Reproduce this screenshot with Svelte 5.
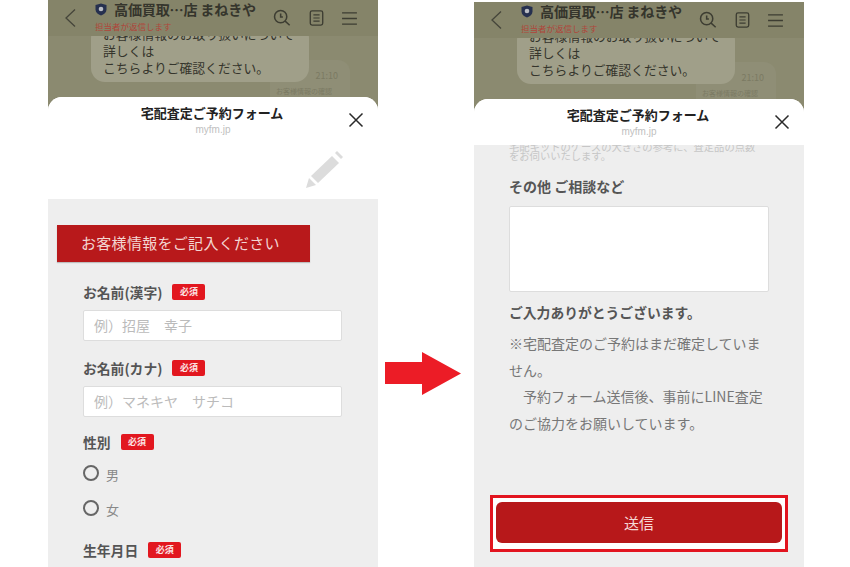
<script>
</script>

{#snippet top()}
  <div class="bar">
    <svg class="back" width="14" height="20" viewBox="0 0 14 20"><path d="M12 1.500 L3 10 L12 18.500" fill="none" stroke="#45453a" stroke-width="1.300"/></svg>
    <div class="titles">
      <div class="name">
        <svg width="12" height="13" viewBox="0 0 12 13"><path d="M6 .5 L11.500 2 V6.500 C11.500 9.500 9 11.500 6 12.500 C3 11.500 .5 9.500 .5 6.500 V2 Z" fill="#26304f"/><circle cx="6" cy="6" r="2.300" fill="#b9bcc4"/></svg>
        <span>高価買取…店 まねきや</span>
      </div>
      <div class="status">担当者が返信します</div>
    </div>
    <div class="tools">
      <svg width="18" height="18" viewBox="0 0 20 20"><circle cx="8.500" cy="8.500" r="6.800" fill="none" stroke="#3d3d32" stroke-width="1.700"/><path d="M13.500 13.500 L18.500 18 M8.500 5 V9 H11" fill="none" stroke="#3d3d32" stroke-width="1.700"/></svg>
      <svg width="15" height="16" viewBox="0 0 16 18"><rect x="1" y="1" width="14" height="16" rx="2" fill="none" stroke="#3d3d32" stroke-width="1.500"/><path d="M4.500 5.500 H11.500 M4.500 9 H11.500 M4.500 12.500 H11.500" stroke="#3d3d32" stroke-width="1.300"/></svg>
      <svg width="15" height="13" viewBox="0 0 16 14"><path d="M0 1 H16 M0 7 H16 M0 13 H16" stroke="#3d3d32" stroke-width="1.400"/></svg>
    </div>
  </div>
  <div class="chat">
    <div class="bubble">
      <div class="clip">お客様情報のお取り扱いについて</div>
      <div>詳しくは</div>
      <div>こちらよりご確認ください。</div>
    </div>
    <div class="reply"><span class="time">21:10</span><span class="small">お客様情報の確認</span></div>
  </div>
{/snippet}

{#snippet sheethead()}
  <div class="head">
    <div class="htitle">宅配査定ご予約フォーム</div>
    <div class="hurl">myfm.jp</div>
    <svg class="close" width="16" height="16" viewBox="0 0 16 16"><path d="M1.500 1.500 L14.500 14.500 M14.500 1.500 L1.500 14.500" stroke="#2a2a2a" stroke-width="1.500"/></svg>
  </div>
{/snippet}

<div class="page">
  <section class="phone left">
    {@render top()}
    <div class="sheet">
      {@render sheethead()}
      <div class="penrow">
        <svg width="38" height="38" viewBox="0 0 38 38"><path d="M26 5 L33 12 L12 32 L5 25 Z" fill="#dcdcdc"/><path d="M29 2 L31 0 L37 6 L35 8 Z" fill="#dcdcdc"/><path d="M3 27 L10 34 L0 37 Z" fill="#dcdcdc"/></svg>
      </div>
      <div class="form">
        <div class="banner">お客様情報をご記入ください</div>
        <div class="fields">
          <div class="lab lab1">お名前(漢字)<span class="req">必須</span></div>
          <div class="inp">例）招屋　幸子</div>
          <div class="lab lab2">お名前(カナ)<span class="req">必須</span></div>
          <div class="inp">例）マネキヤ　サチコ</div>
          <div class="lab lab3">性別<span class="req">必須</span></div>
          <div class="radio r1"><i></i>男</div>
          <div class="radio r2"><i></i>女</div>
          <div class="lab lab4">生年月日<span class="req">必須</span></div>
        </div>
      </div>
    </div>
  </section>

  <div class="arrowbox">
    <svg width="76" height="43" viewBox="0 0 76 43"><path d="M0 10 H37 V0 L76 21.500 L37 43 V32 H0 Z" fill="#ec1c26"/></svg>
  </div>

  <section class="phone right">
    {@render top()}
    <div class="sheet">
      {@render sheethead()}
      <div class="form rform">
        <div class="faint">宅配キットのケースの大きさの参考に、査定品の点数<br />をお伺いいたします。</div>
        <div class="lab other">その他 ご相談など</div>
        <div class="area"></div>
        <div class="lab thanks">ご入力ありがとうございます。</div>
        <p class="note">※宅配査定のご予約はまだ確定していません。<br />　予約フォーム送信後、事前にLINE査定のご協力をお願いしています。</p>
        <div class="spacer"></div>
        <div class="hl"><button>送信</button></div>
      </div>
    </div>
  </section>
</div>

<style>
  :global(body) { margin: 0; background: #fff; }
  .page {
    width: 850px; height: 567px; overflow: hidden; display: flex; padding-left: 48px; box-sizing: border-box;
    font-family: "Noto Sans CJK JP", "Noto Sans", sans-serif;
  }
  .phone { width: 330px; height: 567px; background: #8b8a70; display: flex; flex-direction: column; flex: none; overflow: hidden; }
  .right { margin-top: 2px; height: 565px; }
  .arrowbox { width: 96px; flex: none; display: flex; align-items: flex-start; padding: 352px 0 0 7px; box-sizing: border-box; height: 567px; }
  .bar { height: 36px; flex: none; background: #858469; display: flex; align-items: center; position: relative; }
  .back { margin-left: 15px; flex: none; }
  .titles { margin-left: 18px; flex: none; }
  .name { display: flex; align-items: center; gap: 7px; font-size: 14.100px; font-weight: 700; color: #35352c; line-height: 18px; margin-top: -5px; white-space: nowrap; letter-spacing: -.2px; }
  .status { font-size: 8.500px; color: #b0443a; line-height: 10px; margin-top: 3px; }
  .tools { display: flex; align-items: center; gap: 18px; margin-left: auto; padding-right: 21px; }
  .chat { height: 61px; flex: none; position: relative; overflow: hidden; }
  .bubble { position: absolute; left: 43px; top: -12px; width: 218px; height: 58px; box-sizing: border-box; padding: 1px 12px 0 12px; background: #a09f89; border-radius: 14px; font-size: 12.800px; line-height: 17px; color: #35352c; z-index: 1; }
  .clip { white-space: nowrap; }
  .reply { position: absolute; left: 222px; top: 24px; width: 80px; height: 50px; background: #8f8e76; border-radius: 12px; }
  .time { position: absolute; right: 12px; top: 9px; font-size: 9px; color: #7b7a63; }
  .small { position: absolute; left: 6px; top: 26px; font-size: 7px; color: #7b7a63; white-space: nowrap; }
  .sheet { flex: 1; min-height: 0; background: #fff; border-radius: 14px 14px 0 0; display: flex; flex-direction: column; overflow: hidden; }
  .head { height: 46px; flex: none; position: relative; text-align: center; background: #fff; }
  .htitle { font-size: 13px; font-weight: 700; color: #222; line-height: 18px; padding: 7px 2px 0 0; }
  .hurl { font-size: 10px; color: #c0c0c0; line-height: 12px; margin-top: 2px; font-family: "Liberation Sans", sans-serif; }
  .close { position: absolute; right: 14px; top: 15px; }
  .penrow { height: 56px; display: flex; justify-content: flex-end; padding: 8px 34px 0 0; box-sizing: border-box; flex: none; }
  .form { flex: 1; background: #eeeeee; min-height: 0; overflow: hidden; }
  .banner { margin: 26px 0 0 9px; width: 253px; height: 37px; background: #b8191b; color: #f3d6d2; font-size: 15px; line-height: 36px; padding-left: 24px; box-sizing: border-box; letter-spacing: .3px; box-shadow: 0 1px 1px rgba(0,0,0,.2); }
  .fields { padding: 0 36px 0 35px; }
  .lab { font-size: 13.800px; font-weight: 700; color: #555; line-height: 18px; display: flex; align-items: center; white-space: nowrap; }
  .lab1 { margin-top: 21px; }
  .lab2 { margin-top: 18px; }
  .lab3 { margin-top: 16px; }
  .lab4 { margin-top: 22px; }
  .req { margin-left: 10px; width: 33px; height: 16px; background: #e2171f; color: #fbe3e3; border-radius: 2px; font-size: 9px; line-height: 16px; text-align: center; font-weight: 700; }
  .inp { margin-top: 9px; height: 31px; box-sizing: border-box; background: #fff; border: 1px solid #ddd; border-radius: 2px; font-size: 14px; line-height: 29px; color: #bbb; padding-left: 10px; }
  .radio { display: flex; align-items: center; font-size: 13px; color: #888; height: 20px; }
  .r1 { margin-top: 13px; }
  .radio i { width: 12px; height: 12px; border: 2px solid #666; border-radius: 50%; margin-right: 7px; margin-top: -3px; }
  .r2 { margin-top: 15px; }
  .rform { padding: 0 35px; display: flex; flex-direction: column; }
  .faint { font-size: 10.300px; line-height: 9px; color: #c6c6c6; white-space: nowrap; margin-top: -3px; flex: none; }
  .other { margin-top: 17px; font-size: 14px; }
  .area { height: 86px; margin-top: 11px; background: #fff; border: 1px solid #ddd; border-radius: 2px; box-sizing: border-box; flex: none; }
  .thanks { margin-top: 11px; }
  .note { margin: 9px 0 0; font-size: 14px; line-height: 26.700px; color: #777; }
  .spacer { flex: 1; }
  .hl { margin: 0 -19px 15px; height: 57px; border: 3px solid #e2141f; background: #fff; box-sizing: border-box; padding: 4px 3px; flex: none; }
  .hl button { width: 100%; height: 41px; border: 0; background: #b7181a; color: #f6d9d5; font: inherit; font-size: 15px; border-radius: 6px; }
</style>
